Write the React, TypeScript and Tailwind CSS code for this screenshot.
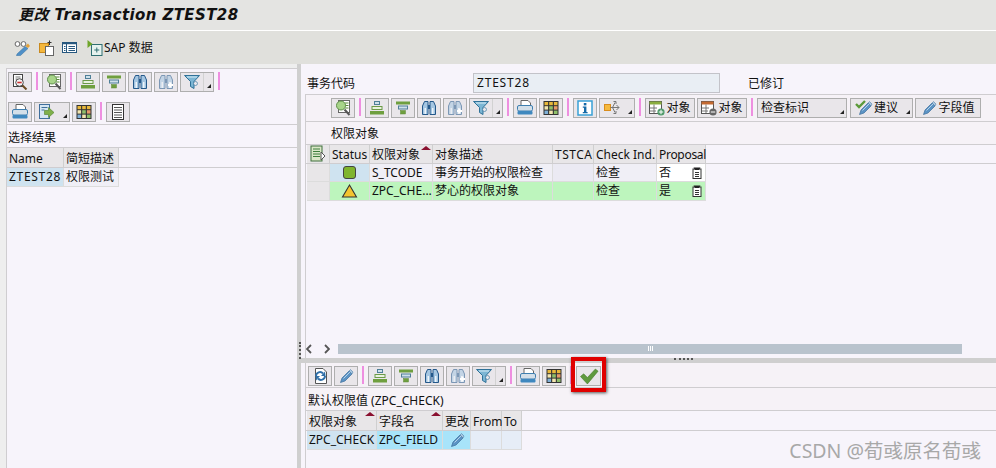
import React from 'react';

const font = { fontFamily: '"Noto Sans", "Noto Sans CJK SC", sans-serif' };

function Ico({ children, w = 16 }: { children: React.ReactNode; w?: number }) {
  return (
    <svg width={w} height={16} viewBox={`0 0 ${w} 16`} className="shrink-0">
      {children}
    </svg>
  );
}

const Pencil = ({ c = '#5b93c4' }: { c?: string }) => (
  <g>
    <path d="M4 10 L11 3 L14 6 L7 13 L2.5 14.5 Z" fill={c} stroke="#3d6f9c" strokeWidth="0.7" />
    <path d="M11 3 L12.5 1.5 L15 4 L14 6 Z" fill="#a9c7e0" stroke="#3d6f9c" strokeWidth="0.5" />
    <path d="M5.5 10.5 L12 4" stroke="#b7d3ea" />
  </g>
);

const Glasses = () => (
  <Ico>
    <circle cx="3.5" cy="4" r="2.4" fill="#fff" stroke="#666" />
    <circle cx="9.5" cy="4" r="2.4" fill="#fff" stroke="#666" />
    <path d="M3 14 L11 6.5 L14 8.5 L6.5 15.5 L2.5 15.8 Z" fill="#4f90c8" stroke="#37709f" strokeWidth="0.5" />
    <path d="M11.5 6 L14 3.5 L16 6 L14 8 Z" fill="#e2a13a" />
  </Ico>
);

const Clip = () => (
  <Ico>
    <rect x="0.5" y="3.5" width="9" height="9" fill="#f4b73c" stroke="#c98a1e" />
    <rect x="6.5" y="6.5" width="8" height="9" fill="#fff" stroke="#666" />
    <path d="M10.5 0.5 V5 M8.5 2.5 H12.5" stroke="#333" />
  </Ico>
);

const ListIco = () => (
  <Ico>
    <rect x="0.5" y="2.5" width="14" height="10" fill="#fff" stroke="#27587f" />
    <path d="M0.5 3.5 H14.5" stroke="#27587f" strokeWidth="1.5" />
    <path d="M4.5 3 V12 M6.5 6.5 H13 M6.5 8.5 H13 M6.5 10.5 H13 M2 6.5 H3.5 M2 8.5 H3.5 M2 10.5 H3.5" stroke="#27587f" />
  </Ico>
);

const SapData = () => (
  <Ico>
    <rect x="4.5" y="4.5" width="10.5" height="11" fill="#e6f2ee" stroke="#2f6f72" />
    <path d="M9.8 7.5 V12.5 M7.3 10 H12.3" stroke="#2f6f72" />
    <path d="M0.5 0 L5.5 4 L0.5 8 Z" fill="#6fa52a" />
  </Ico>
);

const Detail = () => (
  <Ico>
    <rect x="1.5" y="0.5" width="9" height="12" fill="#fff" stroke="#444" />
    <path d="M3.5 3 H8.5 M3.5 5 H5.5" stroke="#777" />
    <circle cx="7.5" cy="8.5" r="3.8" fill="#f5f5f5" stroke="#444" />
    <path d="M5.3 8.5 H9.7" stroke="#c33" strokeWidth="1.6" />
    <path d="M10.5 11.5 L14.5 15.5" stroke="#6b4a20" strokeWidth="2" />
  </Ico>
);

const FindTable = () => (
  <Ico>
    <rect x="3.5" y="0.5" width="11" height="12" fill="#fff" stroke="#666" />
    <path d="M10 3 H13.5 M10 5.5 H13.5 M10 8 H13.5" stroke="#5a8a3a" />
    <circle cx="6" cy="5.5" r="4.5" fill="#a7d489" stroke="#5f8f4a" />
    <path d="M9.5 9.5 L14.5 15" stroke="#555" strokeWidth="2" />
  </Ico>
);

const SortUp = () => (
  <Ico>
    <rect x="5.5" y="1.5" width="5" height="3" fill="#cfe0ea" stroke="#4f7f98" />
    <rect x="3" y="6.5" width="10" height="3" fill="#e9f2df" stroke="#6c9a48" />
    <rect x="1" y="11" width="14" height="3.5" fill="#6f9f3f" />
  </Ico>
);

const SortDown = () => (
  <Ico>
    <rect x="1" y="1.5" width="14" height="3" fill="#6f9f3f" />
    <rect x="3.5" y="6" width="9" height="3" fill="#cfe0ea" stroke="#4f7f98" />
    <rect x="5.5" y="10.5" width="5" height="3.5" fill="#6f9f3f" stroke="#5f8a38" strokeWidth="0.5" />
  </Ico>
);

const Binoc = ({ faded = false }: { faded?: boolean }) => (
  <Ico>
    <g opacity={faded ? 0.55 : 1}>
      <path d="M1.5 14.5 V6 L3.5 1.5 H7 V14.5 Z M14.5 14.5 V6 L12.5 1.5 H9 V14.5 Z" fill="#a5c6e2" stroke="#24588a" />
      <path d="M7 5 H9 V9 H7 Z" fill="#24588a" />
      <path d="M4.2 14 V8 M11.8 14 V8" stroke="#fff" strokeWidth="1.2" />
    </g>
    {faded && <path d="M10 11 H15 M12.5 8.5 V13.5" stroke="#fff" strokeWidth="2" />}
  </Ico>
);

const Funnel = () => (
  <Ico>
    <path d="M0.5 1.5 H15.5 L10 7.5 V14.5 L6.5 12.5 V7.5 Z" fill="#7cb6d4" stroke="#2f7198" />
    <path d="M3 3 H13" stroke="#d8ecf6" />
    <circle cx="11.5" cy="9.5" r="2" fill="#e9e7ec" stroke="#2f7198" strokeWidth="0.6" />
  </Ico>
);

const Printer = () => (
  <Ico>
    <path d="M4 0.5 H11 L13.5 3 V6 H4 Z" fill="#fff" stroke="#666" />
    <rect x="0.5" y="5.5" width="15" height="5.5" rx="1.5" fill="#d3dfe9" stroke="#3f7fb0" />
    <rect x="0.5" y="11" width="15" height="3.5" rx="1" fill="#3f88bf" />
  </Ico>
);

const ExportIco = () => (
  <Ico>
    <rect x="0.5" y="0.5" width="10" height="14" fill="#d5e6f3" stroke="#3f6f9c" />
    <path d="M2.5 3.5 H8.5 M2.5 6 H5.5" stroke="#3f6f9c" />
    <path d="M5.5 6.5 H9.5 V3.5 L15 8.5 L9.5 13.5 V10.5 H5.5 Z" fill="#7fb04a" stroke="#4f7f2c" strokeWidth="0.6" />
  </Ico>
);

const Grid = () => (
  <Ico>
    <rect x="0.5" y="1" width="15" height="14" fill="#333" />
    <rect x="1.5" y="2" width="3.6" height="3.2" fill="#e8b83c" />
    <rect x="6.2" y="2" width="3.6" height="3.2" fill="#e8b83c" />
    <rect x="10.9" y="2" width="3.6" height="3.2" fill="#e8b83c" />
    <rect x="1.5" y="6.2" width="3.6" height="3.4" fill="#f3e6b0" />
    <rect x="6.2" y="6.2" width="3.6" height="3.4" fill="#8fbf6a" />
    <rect x="10.9" y="6.2" width="3.6" height="3.4" fill="#e89a6a" />
    <rect x="1.5" y="10.6" width="3.6" height="3.4" fill="#7fb0d8" />
    <rect x="6.2" y="10.6" width="3.6" height="3.4" fill="#f3e6b0" />
    <rect x="10.9" y="10.6" width="3.6" height="3.4" fill="#8fbf6a" />
  </Ico>
);

const DocList = () => (
  <Ico>
    <rect x="2.5" y="0.5" width="11" height="15" fill="#fff" stroke="#333" />
    <path d="M4 3.5 H12 M4 6 H12 M4 8.5 H12 M4 11 H12 M4 13.5 H12" stroke="#555" />
  </Ico>
);

const Info = () => (
  <Ico>
    <rect x="1" y="1" width="14" height="14" fill="#fff" stroke="#39a0d6" strokeWidth="1.5" />
    <rect x="6.8" y="3" width="2.6" height="2.4" fill="#156aa8" />
    <path d="M5.8 6.5 H9.4 V12 H10.6 V13.2 H5.8 V12 H7 V7.7 H5.8 Z" fill="#156aa8" />
  </Ico>
);

const Transfer = () => (
  <Ico>
    <rect x="0.5" y="4.5" width="6" height="6" fill="#f5b93e" stroke="#d98c1c" />
    <path d="M6.5 7.5 H15 M12.5 5 L15 7.5 L12.5 10 M8.5 7.5 L11 2.5 M9.5 1.5 H12 V4 M8.5 7.5 L11 12.5 M9.5 13.5 H12 V11" fill="none" stroke="#777" />
  </Ico>
);

const RowAdd = () => (
  <Ico>
    <rect x="0.5" y="1.5" width="12" height="12" fill="#fff" stroke="#555" />
    <rect x="0.5" y="1.5" width="12" height="3" fill="#8aad3f" />
    <path d="M1 8 H8 M1 11 H7 M5 4.5 V13" stroke="#777" />
    <circle cx="12" cy="12" r="3.6" fill="#4f9a6a" />
    <path d="M9.8 12 H14.2 M12 9.8 V14.2" stroke="#fff" />
  </Ico>
);

const RowDel = () => (
  <Ico>
    <rect x="0.5" y="1.5" width="12" height="12" fill="#fff" stroke="#555" />
    <rect x="0.5" y="1.5" width="12" height="3" fill="#c46a32" />
    <path d="M1 8 H8 M1 11 H7 M5 4.5 V13" stroke="#777" />
    <circle cx="12" cy="12" r="3.6" fill="#666" />
    <path d="M9.8 12 H14.2" stroke="#fff" />
  </Ico>
);

const CheckPencil = () => (
  <Ico w={18}>
    <path d="M1 4 L4 7 L10 1" fill="none" stroke="#5c9a3a" strokeWidth="2.4" />
    <g transform="translate(2 0)">
      <Pencil />
    </g>
  </Ico>
);

const Refresh = () => (
  <Ico>
    <path d="M3.5 0.5 H11 L14.5 4 V15.5 H3.5 Z" fill="#fff" stroke="#555" />
    <path d="M4 8 A4 4 0 0 1 11 5.5 M13 8 A4 4 0 0 1 6 10.5" fill="none" stroke="#2f6fa8" strokeWidth="2" />
    <path d="M9 8 L13.5 8 L13 3.5 Z M8 8 L3.5 8 L4 12.5 Z" fill="#2f6fa8" />
  </Ico>
);

const CheckBig = () => (
  <svg width="20" height="17" viewBox="0 0 18 16">
    <path d="M1 8 L4 5.5 L7.5 9 L15 1 L17.5 3 L7.5 15 Z" fill="#5f9a3e" stroke="#4a7f30" strokeWidth="0.6" />
  </svg>
);

const TableSettings = () => (
  <svg width="16" height="18" viewBox="0 0 16 18">
    <rect x="1" y="1" width="11" height="15" fill="#dbe8c8" stroke="#3f6f3c" />
    <path d="M3 4 H10 M3 6.5 H10 M3 9 H10 M3 11.5 H10" stroke="#3f7f3c" strokeWidth="1.2" />
    <path d="M11 7 L15 11 L11 15 Z" fill="#fff" stroke="#555" />
  </svg>
);

const ClipBoard = () => (
  <svg width="10" height="12" viewBox="0 0 10 12">
    <rect x="1" y="2" width="8" height="9.5" fill="#fff" stroke="#333" />
    <path d="M1.5 0.5 H8.5 L7 3 H3 Z" fill="#222" />
    <path d="M3 5.5 H7 M3 7.5 H7 M3 9.5 H7" stroke="#333" />
  </svg>
);

const Chevron = ({ right = false }: { right?: boolean }) => (
  <svg width="6" height="10" viewBox="0 0 6 10" className="shrink-0">
    <path d={right ? 'M1 1 L5 5 L1 9' : 'M5 1 L1 5 L5 9'} fill="none" stroke="#555" strokeWidth="1.8" />
  </svg>
);

const Corner = () => (
  <span className="absolute right-[2px] bottom-[3px] w-0 h-0 border-l-[4px] border-l-transparent border-b-[4px] border-b-[#222]" />
);

function Btn({ children, w = 'w-[24px]', drop = false, text }: { children?: React.ReactNode; w?: string; drop?: boolean; text?: string }) {
  return (
    <div className={`${w} h-[20px] shrink-0 flex items-center justify-center gap-[1px] bg-[#e9e6ea] border border-[#aeaeae] text-[12px] text-[#111] relative`}>
      {children}
      {text && <span className="whitespace-nowrap">{text}</span>}
      {drop && <Corner />}
    </div>
  );
}

const FilterBtn = () => (
  <div className="w-[34px] h-[20px] shrink-0 flex items-center bg-[#e9e6ea] border border-[#aeaeae] relative">
    <div className="w-[22px] flex justify-center">
      <Funnel />
    </div>
    <span className="h-[18px] w-px bg-[#d2d2d2]" />
    <Corner />
  </div>
);

const Sep = () => <span className="w-[2px] h-[18px] mx-[2px] shrink-0 bg-[#ee8fe0]" />;

const Arrow = () => (
  <span className="absolute right-[1px] top-[1px] w-0 h-0 border-l-[5px] border-r-[5px] border-b-[4px] border-l-transparent border-r-transparent border-b-[#8a1030]" />
);

function Th({ w, children, sort = false }: { w: string; children: React.ReactNode; sort?: boolean }) {
  return (
    <div className={`${w} shrink-0 relative pl-[2px] pt-[2px] flex items-center bg-[#e8e6e8] border-r border-[#cfcfcf] whitespace-nowrap`}>
      {children}
      {sort && <Arrow />}
    </div>
  );
}

function Td({ w, children, bg, center = false }: { w: string; children?: React.ReactNode; bg: string; center?: boolean }) {
  return (
    <div className={`${w} ${bg} ${center ? 'justify-center' : 'pl-[2px]'} shrink-0 flex items-center border-r border-b border-[#dcdcdc] whitespace-nowrap overflow-hidden`}>
      {children}
    </div>
  );
}

const Rule = () => <div className="h-px bg-[#cfcdd0] shrink-0" />;

export default function App() {
  return (
    <div className="w-[996px] h-[468px] overflow-hidden relative flex flex-col bg-[#f7f4fb] text-[12px] text-[#111]" style={font}>
      <div className="h-[31px] shrink-0 bg-[#e4e4e2] pl-[18px] flex items-center border-b border-white">
        <h1 className="text-[15px] font-bold italic tracking-[0.4px] text-[#111]" style={{ fontFamily: '"DejaVu Sans", "Noto Sans CJK SC", sans-serif' }}>
          更改 Transaction ZTEST28
        </h1>
      </div>
      <div className="h-[33px] shrink-0 bg-[#e0e0dc] pl-[14px] flex items-center">
        <Glasses />
        <div className="ml-[9px]"><Clip /></div>
        <div className="ml-[7px]"><ListIco /></div>
        <div className="flex items-center gap-[1px] ml-[9px]">
          <SapData />
          <span>SAP 数据</span>
        </div>
      </div>

      <div className="flex-1 min-h-0 flex">
        <aside className="w-[297px] shrink-0 pl-[6px] pt-[4px] flex flex-col bg-[#eeeeee]">
          <div className="flex-1 flex flex-col bg-[#f7f4fb] border-t border-l border-[#cfcdd0]">
            <div className="flex items-start gap-[2px] pt-[3px] pl-[1px] h-[26px] shrink-0">
              <Btn><Detail /></Btn>
              <Sep />
              <Btn><FindTable /></Btn>
              <Sep />
              <Btn><SortUp /></Btn>
              <Btn><SortDown /></Btn>
              <Btn><Binoc /></Btn>
              <Btn><Binoc faded /></Btn>
              <FilterBtn />
              <Sep />
            </div>
            <div className="flex items-start gap-[2px] pt-[7px] pl-[1px] h-[29px] shrink-0">
              <Btn><Printer /></Btn>
              <Btn w="w-[36px]" drop><div className="mr-[10px]"><ExportIco /></div></Btn>
              <Btn><Grid /></Btn>
              <Sep />
              <Btn><DocList /></Btn>
            </div>
            <Rule />
            <div className="h-[22px] shrink-0 flex items-center pl-[1px] pt-[3px]">选择结果</div>
            <Rule />
            <div className="flex h-[19px] shrink-0">
              <Th w="w-[57px]">Name</Th>
              <Th w="w-[55px]">简短描述</Th>
            </div>
            <Rule />
            <div className="flex h-[19px] shrink-0">
              <Td w="w-[57px]" bg="bg-[#cfe3f0]"><span className="tracking-[0.7px]">ZTEST28</span></Td>
              <Td w="w-[55px]" bg="bg-[#f0eff6]">权限测试</Td>
            </div>
          </div>
        </aside>

        <div className="w-[4px] shrink-0 bg-[#cfcfcf] relative">
          <span className="absolute left-[2px] top-[278px] h-[17px] w-0 border-l-2 border-dotted border-[#555]" />
        </div>

        <main className="flex-1 min-w-0 flex flex-col">
          <div className="h-[30px] shrink-0 flex items-start pt-[9px] pl-[6px]">
            <span className="w-[166px] h-[20px] pt-[2px] flex items-center">事务代码</span>
            <div className="w-[247px] h-[20px] pl-[3px] flex items-center bg-[#e9eef4] border border-[#c3c3c9] tracking-[0.8px]">ZTEST28</div>
            <span className="ml-[28px] h-[20px] pt-[2px] flex items-center">已修订</span>
          </div>

          <section className="flex-1 min-h-0 ml-[4px] flex flex-col border-l border-[#cfcdd0]">
            <Rule />
            <div className="h-[26px] shrink-0 flex items-start pt-[3px] gap-[2px] pl-[25px] bg-[#f6f2f7]">
              <Btn><FindTable /></Btn>
              <Sep />
              <Btn><SortUp /></Btn>
              <Btn><SortDown /></Btn>
              <Btn><Binoc /></Btn>
              <Btn><Binoc faded /></Btn>
              <FilterBtn />
              <Sep />
              <Btn><Printer /></Btn>
              <Btn><Grid /></Btn>
              <Sep />
              <Btn><Info /></Btn>
              <Btn w="w-[36px]" drop><div className="mr-[10px]"><Transfer /></div></Btn>
              <Sep />
              <Btn w="w-[50px]" text="对象"><RowAdd /></Btn>
              <Btn w="w-[50px]" text="对象"><RowDel /></Btn>
              <Sep />
              <div className="w-[90px] h-[20px] shrink-0 pl-[3px] flex items-center bg-[#e9e6ea] border border-[#aeaeae] relative">
                检查标识
                <Corner />
              </div>
              <div className="ml-px">
                <Btn w="w-[63px]" drop>
                  <div className="flex items-center gap-[1px] mr-[10px]">
                    <CheckPencil />
                    <span className="whitespace-nowrap">建议</span>
                  </div>
                </Btn>
              </div>
              <Btn w="w-[66px]" text="字段值"><Ico><Pencil /></Ico></Btn>
            </div>
            <Rule />
            <div className="h-[22px] shrink-0 flex items-center pl-[25px] pt-[2px] bg-[#f6f2f7]">权限对象</div>
            <Rule />
            <div className="flex h-[18px] shrink-0 pl-[1px]">
              <div className="w-[23px] shrink-0 flex items-center justify-center bg-[#e8e6e8] border-r border-[#cfcfcf]"><TableSettings /></div>
              <Th w="w-[40px]">Status</Th>
              <Th w="w-[63px]" sort>权限对象</Th>
              <Th w="w-[120px]">对象描述</Th>
              <Th w="w-[41px]"><span className="tracking-[0.5px]">TSTCA</span></Th>
              <Th w="w-[63px]">Check Ind.</Th>
              <Th w="w-[49px]"><span className="tracking-[-0.3px]">Proposal</span></Th>
            </div>
            <Rule />
            <div className="flex h-[18px] shrink-0 pl-[1px]">
              <Td w="w-[23px]" bg="bg-[#e8e6e8]" />
              <Td w="w-[40px]" bg="bg-[#cfe3f0]" center>
                <span className="w-[13px] h-[13px] rounded-[3px] bg-[#7fb52e] border border-[#444]" />
              </Td>
              <Td w="w-[63px]" bg="bg-[#f0eff6]">S_TCODE</Td>
              <Td w="w-[120px]" bg="bg-[#f0eff6]">事务开始的权限检查</Td>
              <Td w="w-[41px]" bg="bg-[#ebeaf3]" />
              <Td w="w-[63px]" bg="bg-[#f0eff6]">检查</Td>
              <Td w="w-[49px]" bg="bg-white">
                <div className="w-full flex items-center justify-between pr-[3px]">否<ClipBoard /></div>
              </Td>
            </div>
            <div className="flex h-[19px] shrink-0 pl-[1px]">
              <Td w="w-[23px]" bg="bg-[#e8e6e8]" />
              <Td w="w-[40px]" bg="bg-[#bdf5bd]" center>
                <svg width="17" height="14" viewBox="0 0 15 13">
                  <path d="M7.5 1 L14 12 H1 Z" fill="#f4c430" stroke="#333" />
                </svg>
              </Td>
              <Td w="w-[63px]" bg="bg-[#bdf5bd]">ZPC_CHE...</Td>
              <Td w="w-[120px]" bg="bg-[#bdf5bd]">梦心的权限对象</Td>
              <Td w="w-[41px]" bg="bg-[#bdf5bd]" />
              <Td w="w-[63px]" bg="bg-[#bdf5bd]">检查</Td>
              <Td w="w-[49px]" bg="bg-[#bdf5bd]">
                <div className="w-full flex items-center justify-between pr-[3px]">是<ClipBoard /></div>
              </Td>
            </div>

            <div className="flex-1 min-h-0" />

            <div className="h-[16px] shrink-0 flex items-center pb-[3px]">
              <div className="flex items-center gap-[12px]">
                <Chevron />
                <Chevron right />
              </div>
              <div className="ml-[8px] w-[624px] h-[10px] bg-[#b9c3cd] flex items-center justify-center gap-px">
                <span className="w-px h-[5px] bg-white" />
                <span className="w-px h-[5px] bg-white" />
                <span className="w-px h-[5px] bg-white" />
              </div>
            </div>
          </section>

          <div className="h-[5px] shrink-0 bg-[#cfcfcf] relative">
            <span className="absolute left-[373px] top-0 w-[19px] h-0 border-t-2 border-dotted border-[#555]" />
          </div>

          <section className="h-[105px] shrink-0 ml-[4px] flex flex-col border-l border-[#cfcdd0]">
            <div className="h-[24px] shrink-0 flex items-start pt-[3px] gap-[2px] pl-[2px] bg-[#f6f2f7]">
              <Btn><Refresh /></Btn>
              <Btn><Ico><Pencil /></Ico></Btn>
              <Sep />
              <Btn><SortUp /></Btn>
              <Btn><SortDown /></Btn>
              <Btn><Binoc /></Btn>
              <Btn><Binoc faded /></Btn>
              <FilterBtn />
              <Sep />
              <Btn><Printer /></Btn>
              <Btn><Grid /></Btn>
              <Sep />
              <div className="relative">
                <Btn w="w-[25px]"><CheckBig /></Btn>
                <span className="absolute -left-[5px] -top-[9px] w-[35px] h-[35px] border-[4px] border-[#e00000] shadow-[1px_1px_3px_#555]" />
              </div>
            </div>
            <Rule />
            <div className="h-[22px] shrink-0 flex items-center pl-[2px] pt-[3px] bg-[#f6f2f7]">默认权限值 (ZPC_CHECK)</div>
            <Rule />
            <div className="flex h-[19px] shrink-0 pl-[1px]">
              <Th w="w-[70px]" sort>权限对象</Th>
              <Th w="w-[66px]" sort>字段名</Th>
              <Th w="w-[28px]">更改</Th>
              <Th w="w-[31px]">From</Th>
              <Th w="w-[20px]">To</Th>
            </div>
            <Rule />
            <div className="flex h-[20px] shrink-0 pl-[1px] pb-[1px]">
              <Td w="w-[70px]" bg="bg-[#cfe3f0]">ZPC_CHECK</Td>
              <Td w="w-[66px]" bg="bg-[#a8e4fa]">ZPC_FIELD</Td>
              <Td w="w-[28px]" bg="bg-[#a8e4fa]" center><Ico><Pencil /></Ico></Td>
              <Td w="w-[31px]" bg="bg-[#e6edf7]" />
              <Td w="w-[20px]" bg="bg-[#e6edf7]" />
            </div>
          </section>
        </main>
      </div>

      <span className="absolute right-[15px] bottom-[8px] text-[19.5px] leading-none text-[#a8a8a8]" style={{ fontFamily: '"Noto Sans", "Noto Sans CJK SC", sans-serif' }}>
        CSDN @荀彧原名荀彧
      </span>
    </div>
  );
}
